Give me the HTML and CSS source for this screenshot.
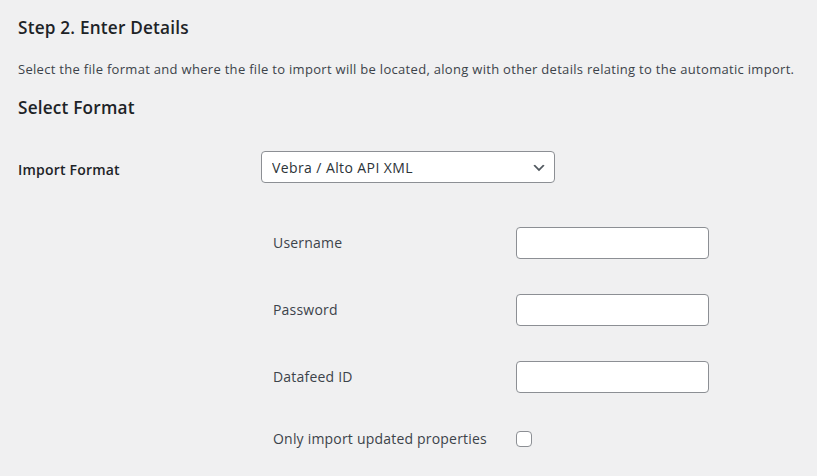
FILE: index.html
```html
<!DOCTYPE html>
<html lang="en">
<head>
    <meta name="viewport" content="width=device-width, initial-scale=1">
    <link rel="stylesheet" href="styles.css">
</head>
<body>
    <div class="wrap">
        <h2>Step 2. Enter Details</h2>
        <p class="intro">Select the file format and where the file to import will be located, along with other details relating to the automatic import.</p>

        <h2 class="section-title">Select Format</h2>

        <div class="form-row">
            <label class="row-label" for="format">Import Format</label>
            <div class="select-box">
                <select id="format" name="format">
                    <option>Vebra / Alto API XML</option>
                </select>
                <svg class="chevron" width="16" height="16" viewBox="0 0 20 20"><path d="M5 6l5 5 5-5 2 1-7 7-7-7 2-1z" fill="#50575e"/></svg>
            </div>
        </div>

        <div class="sub-fields">
            <div class="sub-row">
                <label for="username">Username</label>
                <input type="text" id="username" name="username">
            </div>
            <div class="sub-row">
                <label for="password">Password</label>
                <input type="text" id="password" name="password">
            </div>
            <div class="sub-row">
                <label for="datafeed">Datafeed ID</label>
                <input type="text" id="datafeed" name="datafeed">
            </div>
            <div class="sub-row last">
                <label for="updated">Only import updated properties</label>
                <input type="checkbox" id="updated" name="updated">
            </div>
        </div>
    </div>
</body>
</html>
```

FILE: styles.css
```css
body {
    margin: 0;
    background-color: #f0f0f1;
    color: #3c434a;
    font-family: "Open Sans", "Noto Sans", sans-serif;
    font-size: 13px;
    letter-spacing: 0.2px;
}

.wrap {
    padding: 14px 18px 0 18px;
}

h2 {
    margin: 0;
    font-size: 17.2px;
    font-weight: 600;
    line-height: 28px;
    color: #1d2327;
}

.intro {
    margin: 17px 0 0 0;
    font-size: 13px;
    letter-spacing: 0.3px;
    line-height: 20px;
}

.section-title {
    margin-top: 15px;
}

.form-row {
    display: flex;
    align-items: center;
    margin-top: 29px;
}

.row-label {
    width: 243px;
    padding-top: 4px;
    font-size: 14px;
    font-weight: 600;
    color: #1d2327;
}

.select-box {
    position: relative;
    width: 294px;
}

select {
    -webkit-appearance: none;
    appearance: none;
    width: 100%;
    height: 32px;
    padding: 0 24px 0 10px;
    border: 1px solid #8c8f94;
    border-radius: 4px;
    background: #fff;
    color: #2c3338;
    font-family: inherit;
    font-size: 14px;
    letter-spacing: 0.4px;
}

.chevron {
    position: absolute;
    right: 8px;
    top: 9px;
}

.sub-fields {
    margin-left: 255px;
    padding-top: 26px;
}

.sub-row {
    display: flex;
    align-items: center;
    height: 67px;
}

.sub-row.last {
    margin-top: -5px;
}

.sub-row label {
    width: 243px;
    font-size: 14px;
}

input[type=text] {
    width: 193px;
    height: 32px;
    box-sizing: border-box;
    border: 1px solid #8c8f94;
    border-radius: 4px;
    background: #fff;
}

input[type=checkbox] {
    -webkit-appearance: none;
    appearance: none;
    width: 16px;
    height: 16px;
    margin: 0;
    border: 1px solid #8c8f94;
    border-radius: 4px;
    background: #fff;
}
```
